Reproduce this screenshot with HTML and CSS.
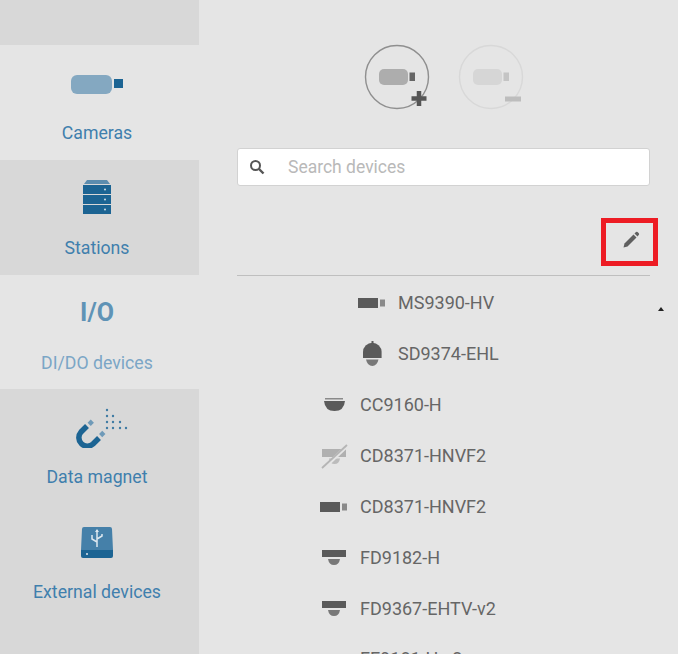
FILE: index.html
```html
<!DOCTYPE html>
<html lang="en">
<head>
<meta charset="utf-8">
<title>Devices</title>
<link rel="stylesheet" href="styles.css">
</head>
<body>
<div class="app">
  <nav class="sidebar">
    <div class="nav-spacer"></div>
    <a class="nav-item active">
      <span class="nav-icon">
        <svg width="56" height="26" viewBox="-2 0 56 26"><rect x="0" y="6" width="41" height="19" rx="6" fill="#84a8c1"/><rect x="43" y="10" width="9" height="9" fill="#1c6493"/></svg>
      </span>
      <span class="nav-label">Cameras</span>
    </a>
    <a class="nav-item">
      <span class="nav-icon">
        <svg width="30" height="36" viewBox="0 0 30 36"><path d="M2 5 L5 1 H25 L28 5Z" fill="#5b8cae"/><rect x="1" y="6" width="28" height="9" fill="#1c6493"/><rect x="1" y="16" width="28" height="9" fill="#1c6493"/><rect x="1" y="26" width="28" height="9" fill="#1c6493"/><circle cx="23" cy="10.500" r="1" fill="#cfdde7"/><circle cx="23" cy="20.500" r="1" fill="#cfdde7"/><circle cx="23" cy="30.500" r="1" fill="#cfdde7"/></svg>
      </span>
      <span class="nav-label">Stations</span>
    </a>
    <a class="nav-item active">
      <span class="nav-icon io-icon">I/O</span>
      <span class="nav-label faded">DI/DO devices</span>
    </a>
    <a class="nav-item">
      <span class="nav-icon">
        <svg width="62" height="44" viewBox="-10 -4 62 44"><path d="M11 18 L5 24 A8.500 8.500 0 0 0 17 36 L23 30" fill="none" stroke="#1c6493" stroke-width="5.500"/><rect x="12.500" y="12.500" width="4.500" height="4.500" fill="#6f9ab8" transform="rotate(45 14.750 14.750)"/><rect x="24" y="23.700" width="4.500" height="4.500" fill="#6f9ab8" transform="rotate(45 26.250 25.950)"/><g fill="#3f7ba3"><circle cx="31" cy="2" r="1.200"/><circle cx="31" cy="8" r="1.200"/><circle cx="37" cy="8" r="1.200"/><circle cx="31" cy="14" r="1.200"/><circle cx="37" cy="14" r="1.200"/><circle cx="44" cy="14" r="1.200"/><circle cx="31" cy="20" r="1.200"/><circle cx="37" cy="20" r="1.200"/><circle cx="44" cy="20" r="1.200"/><circle cx="50" cy="20" r="1.200"/></g></svg>
      </span>
      <span class="nav-label">Data magnet</span>
    </a>
    <a class="nav-item">
      <span class="nav-icon">
        <svg width="34" height="36" viewBox="0 -4 34 36"><path d="M4 0 H30 Q32 0 32 2 L33 23 H1 L2 2 Q2 0 4 0Z" fill="#4580a9"/><path d="M1 23 H33 V29 Q33 31 31 31 H3 Q1 31 1 29Z" fill="#1c6493"/><circle cx="7" cy="27" r="1" fill="#dce6ee"/><path d="M17 3 V20 M17 15 L12 12 V8 M17 12 L22 9 V7" fill="none" stroke="#dce6ee" stroke-width="1.500"/><path d="M17 2 L15 5 H19Z" fill="#dce6ee"/></svg>
      </span>
      <span class="nav-label">External devices</span>
    </a>
  </nav>
  <main class="main">
    <div class="actions">
      <button class="round-btn">
        <svg width="66" height="66" viewBox="0 0 66 66"><circle cx="33" cy="33" r="31.500" fill="none" stroke="#8f8f8f" stroke-width="1.400"/><rect x="15" y="25" width="29" height="16" rx="5" fill="#adadad"/><rect x="45.500" y="28.500" width="5.500" height="8.500" fill="#666"/><path d="M55 47 V62 M47.500 54.500 H62.500" stroke="#555" stroke-width="4.500"/></svg>
      </button>
      <button class="round-btn">
        <svg width="66" height="66" viewBox="0 0 66 66"><circle cx="33" cy="33" r="31.500" fill="none" stroke="#d8d8d8" stroke-width="1.400"/><rect x="15" y="25" width="29" height="16" rx="5" fill="#d6d6d6"/><rect x="45.500" y="28.500" width="5.500" height="8.500" fill="#c4c4c4"/><rect x="47" y="52.500" width="16" height="5" fill="#bdbdbd"/></svg>
      </button>
    </div>
    <div class="search">
      <svg class="search-icon" width="16" height="16" viewBox="0 0 16 16"><circle cx="6.500" cy="6.500" r="4.500" fill="none" stroke="#555" stroke-width="2"/><path d="M10 10 L14.500 14.500" stroke="#555" stroke-width="2.400"/></svg>
      <span class="search-placeholder">Search devices</span>
    </div>
    <div class="toolbar">
      <span class="edit-box">
        <svg width="18" height="18" viewBox="0 0 18 18"><path d="M1.500 16.500 L2.500 12.500 L11.500 3.500 L14.500 6.500 L5.500 15.500Z" fill="#5f5f5f"/><path d="M12.500 2.500 L14 1 Q14.800 0.300 15.500 1 L16.800 2.300 Q17.400 3 16.900 3.700 L15.500 5.500Z" fill="#5f5f5f"/></svg>
      </span>
    </div>
    <ul class="device-list">
      <li class="device child">
        <svg class="device-icon" width="28" height="12" viewBox="0 0 28 12"><rect x="0" y="1" width="20" height="10" fill="#5a5a5a"/><rect x="22" y="2.500" width="5" height="7" fill="#8a8a8a"/></svg>
        <span>MS9390-HV</span>
      </li>
      <li class="device child">
        <svg class="device-icon" width="28" height="26" viewBox="0 0 28 26"><rect x="13.500" y="0" width="2" height="3" fill="#5a5a5a"/><path d="M5 17 V11 A9.300 9.300 0 0 1 23.600 11 V17Z" fill="#5a5a5a"/><path d="M8 18.500 H20.500 Q19 25 14.300 25 Q9.500 25 8 18.500Z" fill="#787878"/></svg>
        <span>SD9374-EHL</span>
      </li>
      <li class="device">
        <svg class="device-icon" width="28" height="14" viewBox="0 0 28 14"><rect x="5" y="0" width="18" height="1.500" fill="#8a8a8a"/><path d="M4 3 H25 Q24 13 14.500 13 Q5 13 4 3Z" fill="#5a5a5a"/></svg>
        <span>CC9160-H</span>
      </li>
      <li class="device">
        <svg class="device-icon" width="28" height="26" viewBox="0 0 28 26"><rect x="2" y="6" width="24" height="8" fill="#b0b0b0"/><path d="M9 15.500 H20 Q19 21 14.500 21 Q10 21 9 15.500Z" fill="#bbb"/><path d="M4 25 L27 3" stroke="#e5e5e5" stroke-width="3.500"/><path d="M2 25 L27 2" stroke="#b5b5b5" stroke-width="1.800"/></svg>
        <span>CD8371-HNVF2</span>
      </li>
      <li class="device">
        <svg class="device-icon" width="28" height="12" viewBox="0 0 28 12"><rect x="0" y="1" width="20" height="10" fill="#5a5a5a"/><rect x="22" y="2.500" width="5" height="7" fill="#8a8a8a"/></svg>
        <span>CD8371-HNVF2</span>
      </li>
      <li class="device">
        <svg class="device-icon" width="28" height="16" viewBox="0 0 28 16"><rect x="2" y="0" width="24" height="7" fill="#5a5a5a"/><path d="M8 9 H20 Q19 15 14 15 Q9 15 8 9Z" fill="#787878"/></svg>
        <span>FD9182-H</span>
      </li>
      <li class="device">
        <svg class="device-icon" width="28" height="16" viewBox="0 0 28 16"><rect x="2" y="0" width="24" height="7" fill="#5a5a5a"/><path d="M8 9 H20 Q19 15 14 15 Q9 15 8 9Z" fill="#787878"/></svg>
        <span>FD9367-EHTV-v2</span>
      </li>
      <li class="device">
        <span class="device-icon"></span>
        <span>FE9181-H-v2</span>
      </li>
    </ul>
    <span class="scroll-arrow"></span>
  </main>
</div>
</body>
</html>
```
FILE: styles.css
```css
* { box-sizing: border-box; }
html, body { margin: 0; height: 100%; overflow: hidden; }
body { background: #e5e5e5; font-family: Roboto, "Noto Sans", sans-serif; }
.app { display: flex; height: 654px; overflow: hidden; }

.sidebar { width: 199px; flex: none; background: #d8d8d8; display: flex; flex-direction: column; }
.nav-spacer { height: 45px; }
.nav-item { height: 115px; padding-right: 5px; display: flex; flex-direction: column; align-items: center; color: #3f7fad; }
.nav-item:nth-child(4) { height: 114px; }
.nav-item.active { background: #e5e5e5; }
.nav-icon { height: 74px; display: flex; align-items: center; justify-content: center; }
.nav-label { font-size: 17.7px; line-height: 20px; margin-top: 4px; }
.faded { color: #7ba6c6; }
.io-icon { font-size: 25px; font-weight: 700; color: #5f93b6; }

.main { position: relative; flex: 1; padding: 0 28px 0 38px; display: flex; flex-direction: column; }
.actions { flex: none; display: flex; justify-content: center; gap: 28px; padding: 44px 0 0 1px; height: 148px; }
.round-btn { width: 66px; height: 66px; padding: 0; border: 0; background: none; display: block; }
.round-btn svg { display: block; }

.search { height: 38px; background: #fff; border: 1px solid #d2d2d2; border-radius: 3px; display: flex; align-items: center; padding-left: 11px; flex: none; }
.search-icon { flex: none; }
.search-placeholder { margin-left: 23px; font-size: 17.5px; color: #b9b9b9; }

.toolbar { flex: none; height: 90px; border-bottom: 1px solid #bfbfbf; display: flex; justify-content: flex-end; align-items: flex-start; padding-top: 32px; }
.edit-box { width: 57px; height: 48px; border: 5px solid #ed1c24; margin-right: -8px; display: flex; align-items: center; justify-content: center; padding-left: 2px; padding-bottom: 5px; }

.device-list { list-style: none; margin: 0; padding: 1px 0 0; flex: none; }
.device { height: 51px; display: flex; align-items: center; padding-left: 83px; font-size: 18px; color: #666; }
.device.child { padding-left: 121px; }
.device:last-child { margin-top: -1px; }
.device-icon { width: 28px; flex: none; margin-right: 12px; }
.scroll-arrow { position: absolute; top: 307px; left: 459px; width: 0; height: 0; border-left: 3px solid transparent; border-right: 3px solid transparent; border-bottom: 4px solid #222; }
```
